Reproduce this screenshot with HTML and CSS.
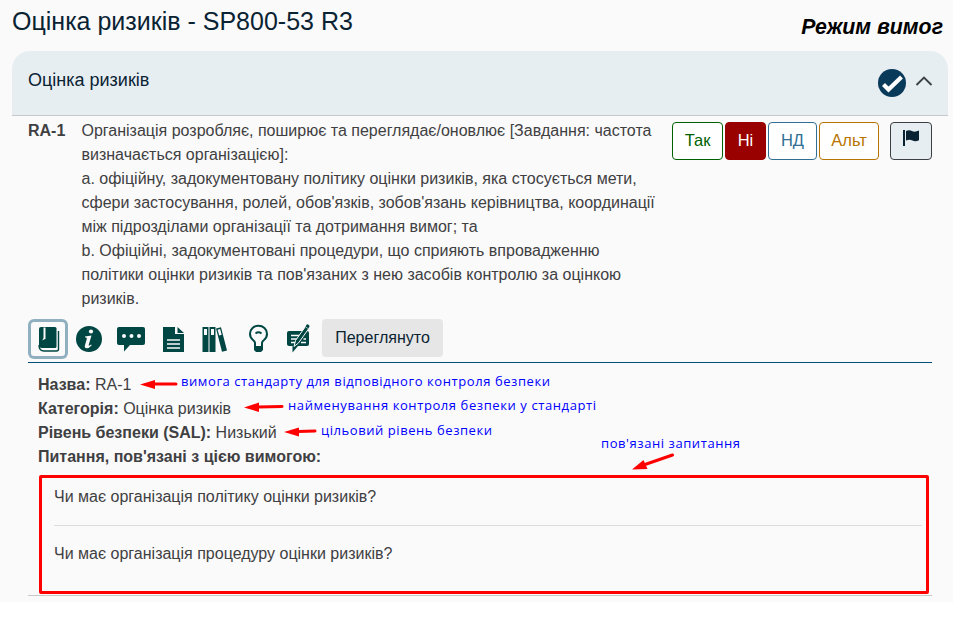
FILE: index.html
```html
<!DOCTYPE html>
<html lang="uk">
<head>
<meta charset="utf-8">
<title>Оцінка ризиків</title>
<link rel="stylesheet" href="styles.css">
</head>
<body>
<main class="page">
  <header class="top">
    <h1 class="title">Оцінка ризиків - SP800-53 R3</h1>
    <div class="mode">Режим вимог</div>
  </header>
  <section class="panel">
    <div class="panel-head">
      <h2 class="panel-title">Оцінка ризиків</h2>
      <svg class="check" width="28" height="28" viewBox="0 0 28 28"><circle cx="14" cy="14" r="14" fill="#0a3a5a"/><path d="M5.500 15.500 10.500 20.500 23.500 8" fill="none" stroke="#fff" stroke-width="4.200"/></svg>
      <svg class="chevron" width="18" height="12" viewBox="0 0 18 12"><path d="M1.500 10 9 2.500 16.500 10" fill="none" stroke="#3c4045" stroke-width="1.900"/></svg>
    </div>
    <div class="content">
      <div class="requirement">
        <div class="code">RA-1</div>
        <div class="text">Організація розробляє, поширює та переглядає/оновлює [Завдання: частота<br>визначається організацією]:<br>a. офіційну, задокументовану політику оцінки ризиків, яка стосується мети,<br>сфери застосування, ролей, обов'язків, зобов'язань керівництва, координації<br>між підрозділами організації та дотримання вимог; та<br>b. Офіційні, задокументовані процедури, що сприяють впровадженню<br>політики оцінки ризиків та пов'язаних з нею засобів контролю за оцінкою<br>ризиків.</div>
        <div class="answers">
          <button class="btn yes">Так</button>
          <button class="btn no">Ні</button>
          <button class="btn na">НД</button>
          <button class="btn alt">Альт</button>
          <button class="btn flag"><svg width="16" height="16" viewBox="0 0 16 16"><path d="M0 0h2v16H0zM3 1c3-1.300 4.500-.5 6.500.3 2 .7 4 .3 6.500-.8v9.700c-2.500 1.200-4.500 1.200-6.500.4-2-.8-3.500-1.200-6.500 0z" fill="#0a2333"/></svg></button>
        </div>
      </div>
      <div class="tools">
        <span class="tool active"><svg width="40" height="40" viewBox="0 0 40 40"><path d="M13 8h14q1.500 0 1.500 1.500v18q0 1.500-1.500 1.500H14q-3 0-3-3V10q0-2 2-2z" fill="#004643"/><path d="M15.500 8.500h2V20q-1.800 0-3 1.500 0-1.500 1-2.500z" fill="#fafafa"/><path d="M11 26q0 6 5 6h12.500q2 0 2-2V12" fill="none" stroke="#004643" stroke-width="1.400"/></svg></span>
        <span class="tool"><svg width="40" height="40" viewBox="0 0 40 40"><circle cx="19" cy="20" r="13" fill="#004643"/><circle cx="21" cy="12.500" r="2.100" fill="#fafafa"/><path d="M15 17.500l6.500-1-2.800 9.500q-.2 1 .8.600l1.700-1 .5.600q-2.500 3-5 3-2.500 0-1.800-2.700l2-7q.2-1-1.900-1.200z" fill="#fafafa"/></svg></span>
        <span class="tool"><svg width="40" height="40" viewBox="0 0 40 40"><path d="M7 8h24q2 0 2 2v14q0 2-2 2H18l-6 6.500V26H7q-2 0-2-2V10q0-2 2-2z" fill="#004643"/><g fill="#fafafa"><circle cx="12" cy="17" r="2"/><circle cx="19.500" cy="17" r="2"/><circle cx="27" cy="17" r="2"/></g></svg></span>
        <span class="tool"><svg width="40" height="40" viewBox="0 0 40 40"><path d="M9 8h12v7h9v18H9zM23.500 8l6.500 6h-6.500z" fill="#004643"/><path d="M13 21h13M13 25h13M13 29h13" stroke="#fafafa" stroke-width="1.600"/></svg></span>
        <span class="tool"><svg width="40" height="40" viewBox="0 0 40 40"><path d="M6.500 8h6v25h-6zM13.500 8h6v25h-6zM20 9.500l5-1.300L31 31.500l-5 1.300z" fill="#004643"/><path d="M8 10h3v6H8zM15 10h3v6h-3zM21.600 10.700l2.500-.7 1.600 5.800-2.500.7z" fill="#fafafa"/></svg></span>
        <span class="tool"><svg width="40" height="40" viewBox="0 0 40 40"><path d="M17 28v-4q0-1.500-2-3c-2-1.600-3-3.800-3-6.200 0-5 4-8 8.500-8s8.500 3 8.500 8c0 2.400-1 4.600-3 6.200q-2 1.500-2 3v4z" fill="none" stroke="#004643" stroke-width="2"/><path d="M16 27h9v4l-2 2h-5l-2-2z" fill="#004643"/><path d="M17.500 14.500q3-2.500 6 0" fill="none" stroke="#004643" stroke-width="1.800"/></svg></span>
        <span class="tool"><svg width="40" height="40" viewBox="0 0 40 40"><path d="M9 12h18q2 0 2 2v11q0 2-2 2h-9l-5.500 6.500V27H9q-2 0-2-2V14q0-2 2-2z" fill="#004643"/><path d="M11 16.500h10M11 20h8M11 23.500h4M21 23.500h5M23.500 20H26" stroke="#fafafa" stroke-width="1.300"/><path d="M14 27.500l1.500-6L25.500 7.500l3.200 2.200L18.500 24z" fill="#004643" stroke="#fafafa" stroke-width="1"/><path d="M25.500 7.500l1-1.700q.7-.8 1.600-.2l1 .7q.8.700.3 1.500l-1 1.700z" fill="#004643"/></svg></span>
        <button class="reviewed">Переглянуто</button>
      </div>
      <div class="details">
        <div><b>Назва:</b> RA-1</div>
        <div><b>Категорія:</b> Оцінка ризиків</div>
        <div><b>Рівень безпеки (SAL):</b> Низький</div>
        <div><b>Питання, пов'язані з цією вимогою:</b></div>
        <div class="questions">
          <div class="question">Чи має організація політику оцінки ризиків?</div>
          <div class="question">Чи має організація процедуру оцінки ризиків?</div>
        </div>
      </div>
    </div>
  </section>
  <svg class="notes" width="953" height="620" viewBox="0 0 953 620">
    <g class="arrows">
      <path class="shaft" d="M176 384H152M282 406.500 258 407M315 431 298 431.500M672.500 455 645 464.500"/>
      <path d="M140 384.500 155 380V389zM244 407.500 259 402.500V412zM284 432 299 427.500V436.500zM632 469.500 643.500 460 647.500 469z"/>
    </g>
    <g class="labels">
      <text x="181" y="386" textLength="369">вимога стандарту для відповідного контроля безпеки</text>
      <text x="288" y="410" textLength="308">найменування контроля безпеки у стандарті</text>
      <text x="321" y="435" textLength="171">цільовий рівень безпеки</text>
      <text x="601" y="448" textLength="139">пов'язані запитання</text>
    </g>
  </svg>
</main>
</body>
</html>
```
FILE: styles.css
```css
* { box-sizing: border-box; }
body { margin: 0; background: #fff; color: #3f4042; font: 16px/24px "Liberation Sans", Arial, sans-serif; }
.page { position: relative; height: 602px; background: #fafafa; }
.top { display: flex; justify-content: space-between; height: 51px; padding: 6px 10px 0 12px; }
.title { margin: 0; font-size: 25px; line-height: 30px; font-weight: 400; color: #0a2333; white-space: nowrap; }
.mode { padding-top: 8px; font-size: 21.3px; line-height: 26px; font-weight: 700; font-style: italic; color: #000; }
.panel { margin: 0 5px 0 12px; }
.panel-head { display: flex; height: 65px; padding: 17px 15px 0 16px; border-radius: 18px 18px 0 0; background: #e7eef2; border-bottom: 1px solid #c4c8cb; }
.panel-title { flex: 1; margin: 0; font-size: 18px; line-height: 24px; font-weight: 400; color: #0a2333; }
.check { margin: 1px 9px 0 0; }
.chevron { margin-top: 7px; }
.content { margin: 0 16px; height: 480px; border-bottom: 1px solid #c8c8c8; }
.requirement { display: flex; padding-top: 3px; height: 202px; }
.code { width: 53.5px; font-weight: 700; }
.text { width: 590.5px; white-space: nowrap; }
.answers { display: flex; gap: 2px; padding-top: 3px; }
.btn { height: 38px; padding: 0 0 2px; border: 1px solid; border-radius: 4px; background: #fff; font: inherit; font-size: 16.5px; }
.yes { width: 51px; color: #006100; }
.no { width: 41px; color: #fff; background: #900; border-color: #900; }
.na { width: 49px; color: #316f94; }
.alt { width: 60px; color: #b87400; }
.flag { display: flex; justify-content: center; width: 42px; margin-left: 9px; padding-top: 7px; background: #e7eef2; border-color: #3c4045; }
.tools { display: flex; gap: 2px; height: 45px; padding-top: 1px; border-bottom: 1px solid #00507a; }
.tool { width: 40px; height: 40px; }
.tool svg { display: block; }
.tool.active { border-radius: 6px; box-shadow: inset 0 0 0 3px #90b0c2; }
.reviewed { width: 121px; height: 38px; padding: 0; border: 0; border-radius: 4px; background: #e6e6e6; color: #0a2333; font: inherit; }
.details { padding: 10px 3px 0 10px; }
.questions { margin: 6px 0 0 1px; height: 119px; padding: 0 4px 0 12px; border: 3px solid #f00; border-radius: 2px; }
.question { height: 47px; padding-top: 7px; }
.question + .question { height: 60px; padding-top: 16px; border-top: 1px solid #ddd; }
.notes { position: absolute; left: 0; top: 0; pointer-events: none; }
.arrows { fill: #f00; }
.shaft { fill: none; stroke: #f00; stroke-width: 3; stroke-linecap: round; }
.labels { fill: #00f; font: 13px "Open Sans", "Noto Sans", sans-serif; }
```
